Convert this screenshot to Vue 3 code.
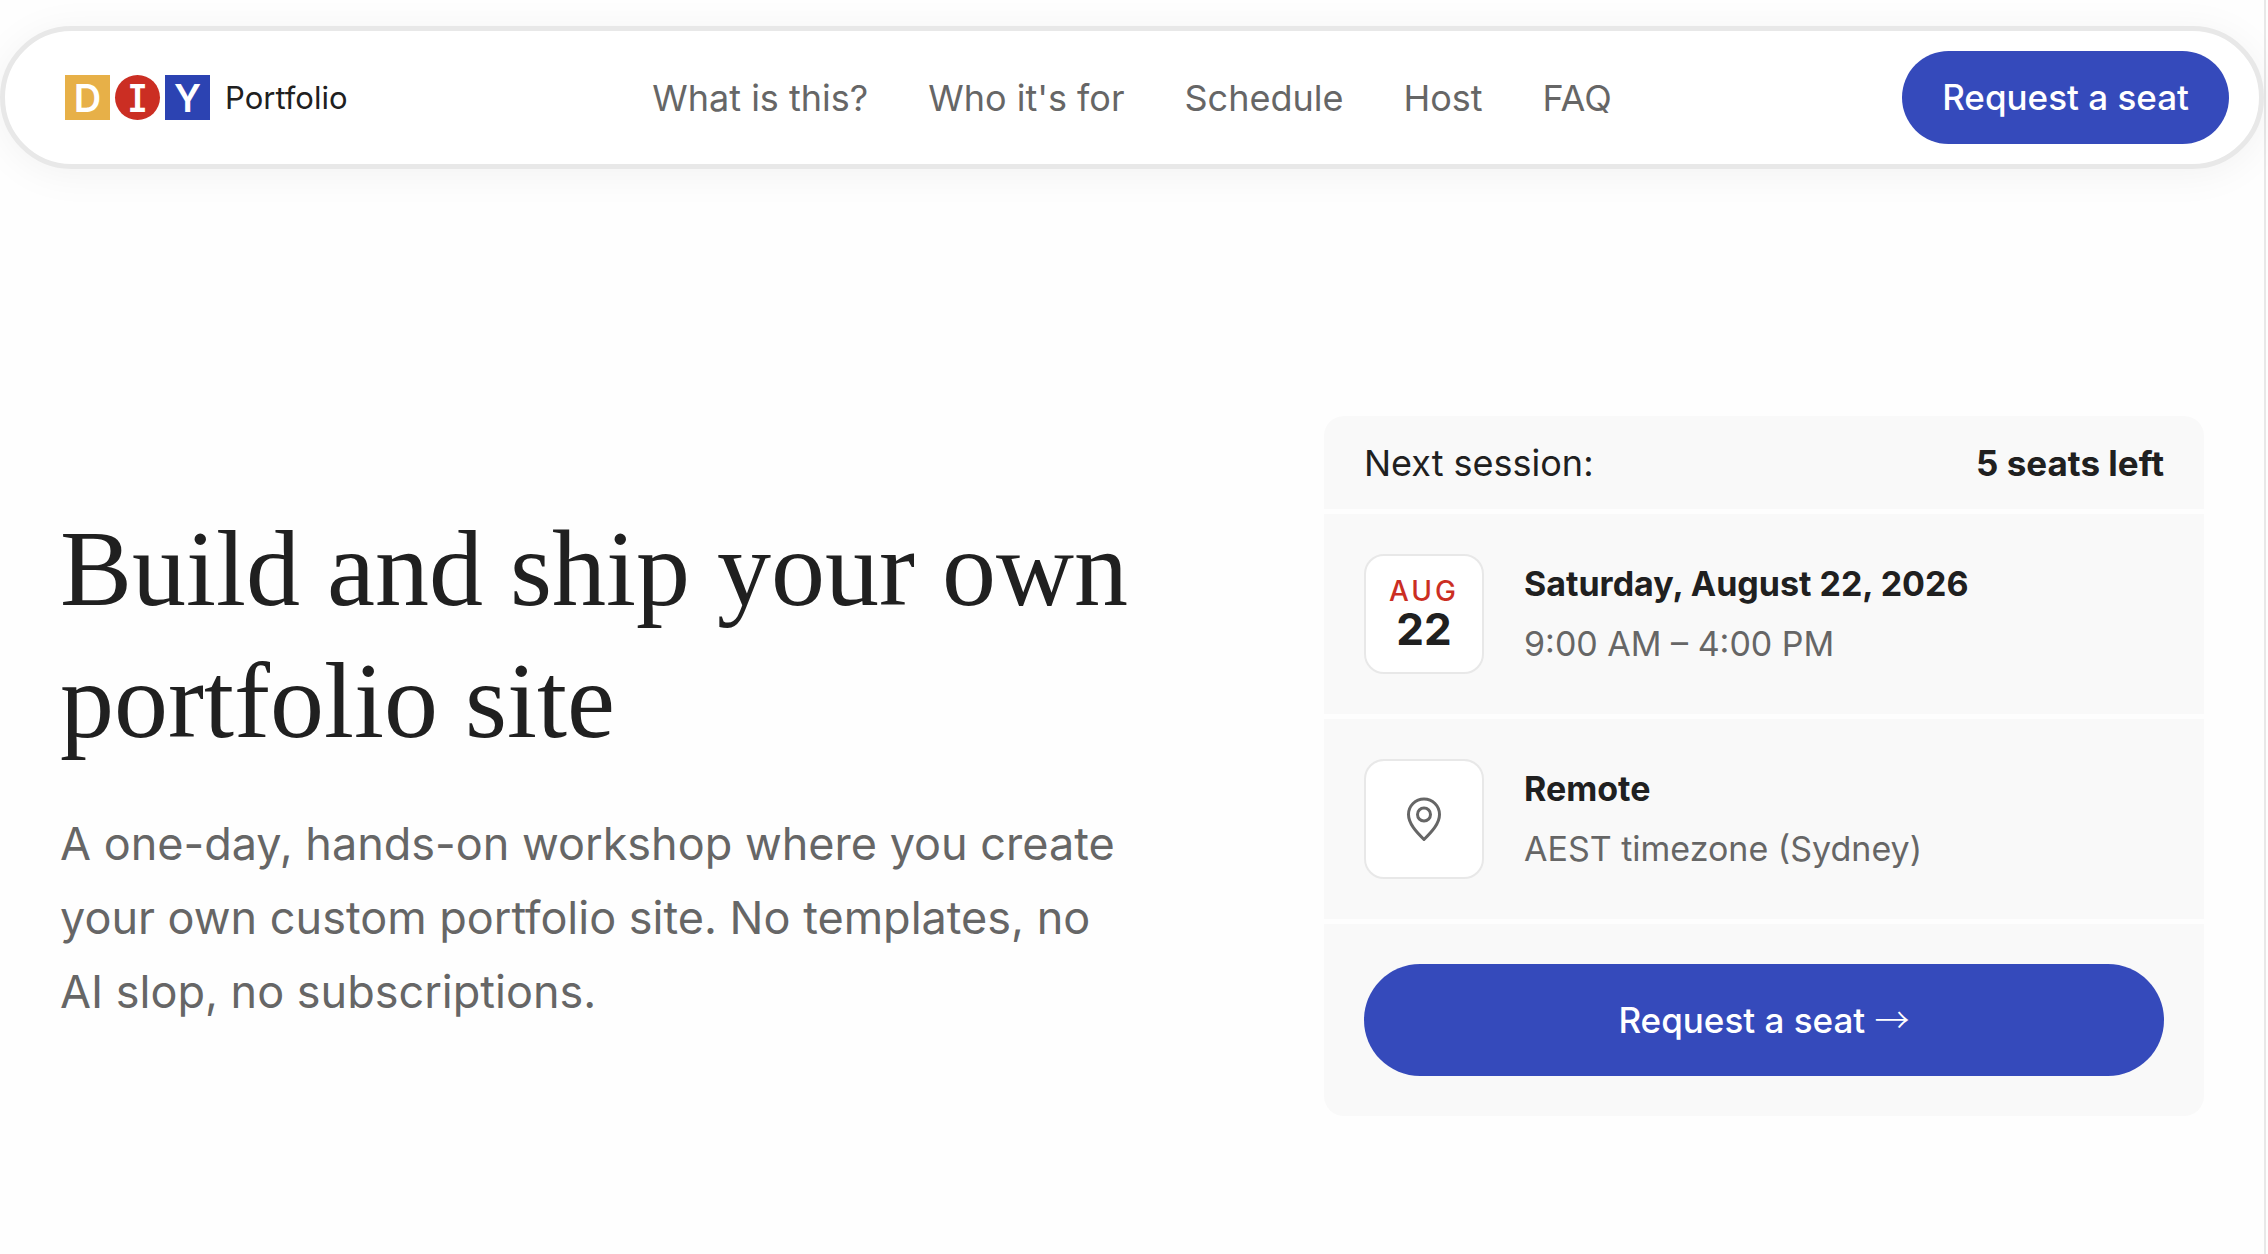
<script setup>
const tiles = [
  { letter: 'D', kind: 'yellow' },
  { letter: 'I', kind: 'red' },
  { letter: 'Y', kind: 'blue' },
]

const links = [
  { label: 'What is this?', href: '#about' },
  { label: "Who it's for", href: '#audience' },
  { label: 'Schedule', href: '#schedule' },
  { label: 'Host', href: '#host' },
  { label: 'FAQ', href: '#faq' },
]
</script>

<template>
  <div class="page">
    <header class="navbar">
      <a class="brand" href="#top">
        <span class="tiles">
          <span v-for="t in tiles" :key="t.letter" class="tile" :class="t.kind">{{ t.letter }}</span>
        </span>
        <span class="brand-name">Portfolio</span>
      </a>
      <nav class="links" aria-label="Main">
        <a v-for="l in links" :key="l.href" class="link" :href="l.href">{{ l.label }}</a>
      </nav>
      <div class="actions">
        <button class="button" type="button">Request a seat</button>
      </div>
    </header>

    <main class="hero">
      <section class="intro">
        <h1 class="title">Build and ship your own portfolio site</h1>
        <p class="lead">
          A one-day, hands-on workshop where you create your own custom portfolio site. No templates, no AI slop, no
          subscriptions.
        </p>
      </section>

      <aside class="card" aria-label="Next session">
        <div class="panel summary">
          <span>Next session:</span>
          <strong class="seats">5 seats left</strong>
        </div>
        <div class="panel row">
          <div class="badge">
            <span class="month">AUG</span>
            <span class="day">22</span>
          </div>
          <div class="details">
            <strong>Saturday, August 22, 2026</strong>
            <span class="muted">9:00 AM – 4:00 PM</span>
          </div>
        </div>
        <div class="panel row">
          <div class="badge">
            <svg class="pin" viewBox="0 0 34 44" aria-hidden="true">
              <path d="M17 42.500C9 34.500 1.500 26.500 1.500 17.500a15.500 15.500 0 0 1 31 0C32.500 26.500 25 34.500 17 42.500Z" />
              <circle cx="17" cy="17.500" r="6.500" />
            </svg>
          </div>
          <div class="details">
            <strong>Remote</strong>
            <span class="muted">AEST timezone (Sydney)</span>
          </div>
        </div>
        <div class="panel action">
          <button class="button wide" type="button">Request a seat <span class="arrow">→</span></button>
        </div>
      </aside>
    </main>
  </div>
</template>

<style>
body {
  margin: 0;
  background: #fefefe;
}
</style>

<style scoped>
.page {
  box-sizing: border-box;
  min-height: 100vh;
  margin-right: 2px;
  padding-top: 26px;
  border-right: 2px solid #e8e8e8;
  color: #202020;
  font-family: Inter, "Liberation Sans", sans-serif;
  font-size: 36px;
  line-height: 60px;
  display: flex;
  flex-direction: column;
}

.navbar {
  display: grid;
  grid-template-columns: 1fr auto 1fr;
  align-items: center;
  padding: 20px 30px;
  border: 5px solid #e8e8e8;
  border-radius: 72px;
  background: #fff;
  box-shadow: 0 5px 40px rgba(0, 0, 0, 0.05);
}

.brand {
  display: flex;
  align-items: center;
  gap: 15px;
  padding-left: 30px;
  color: inherit;
  text-decoration: none;
}

.tiles {
  display: flex;
  gap: 5px;
}

.tile {
  width: 45px;
  height: 45px;
  color: #fff;
  font-size: 38px;
  font-weight: 600;
  line-height: 46px;
  text-align: center;
  font-feature-settings: "cv08";
}

.yellow {
  background: #e7b048;
}

.red {
  border-radius: 50%;
  background: #cb2e23;
}

.blue {
  background: #2c43b2;
}

.brand-name {
  font-size: 31px;
}

.links {
  display: flex;
  gap: 60px;
}

.link {
  color: #666;
  text-decoration: none;
}

.actions {
  display: flex;
  justify-content: flex-end;
}

.button {
  padding: 0 40px;
  border: 0;
  border-radius: 56px;
  background: #354abb;
  color: #fff;
  font: inherit;
  font-size: 35px;
  font-weight: 500;
  line-height: 93px;
}

.hero {
  display: grid;
  grid-template-columns: minmax(0, 5fr) minmax(0, 4fr);
  align-items: center;
  gap: 164px;
  padding: 247px 60px 120px;
}

.title {
  margin: 0 0 40px;
  font-family: "Liberation Serif", serif;
  font-size: 108px;
  font-weight: 400;
  line-height: 132px;
}

.lead {
  max-width: 1070px;
  margin: 0;
  color: #666;
  font-size: 45px;
  line-height: 74px;
}

.card {
  display: flex;
  flex-direction: column;
  gap: 5px;
  overflow: hidden;
  border-radius: 20px;
}

.panel {
  padding: 40px;
  background: #f9f9f9;
}

.summary {
  display: flex;
  justify-content: space-between;
  padding-block: 17px 16px;
}

.seats {
  font-size: 35px;
}

.row {
  display: flex;
  align-items: center;
  gap: 40px;
}

.badge {
  box-sizing: border-box;
  width: 120px;
  height: 120px;
  display: flex;
  flex-direction: column;
  align-items: center;
  justify-content: center;
  border: 2px solid #e8e8e8;
  border-radius: 20px;
  background: #fff;
}

.month {
  color: #cb2e23;
  font-size: 28px;
  font-weight: 500;
  line-height: 34px;
  letter-spacing: 3px;
}

.day {
  padding-bottom: 4px;
  font-size: 44px;
  font-weight: 700;
  line-height: 42px;
}

.pin {
  width: 34px;
  height: 44px;
  fill: none;
  stroke: #666;
  stroke-width: 3;
}

.details {
  display: flex;
  flex-direction: column;
  font-size: 34px;
}

.muted {
  color: #666;
}

.wide {
  width: 100%;
  line-height: 112px;
}

.action {
  display: flex;
}

.arrow {
  font-family: "Noto Sans CJK SC", sans-serif;
  font-weight: 300;
  line-height: 1;
}
</style>
